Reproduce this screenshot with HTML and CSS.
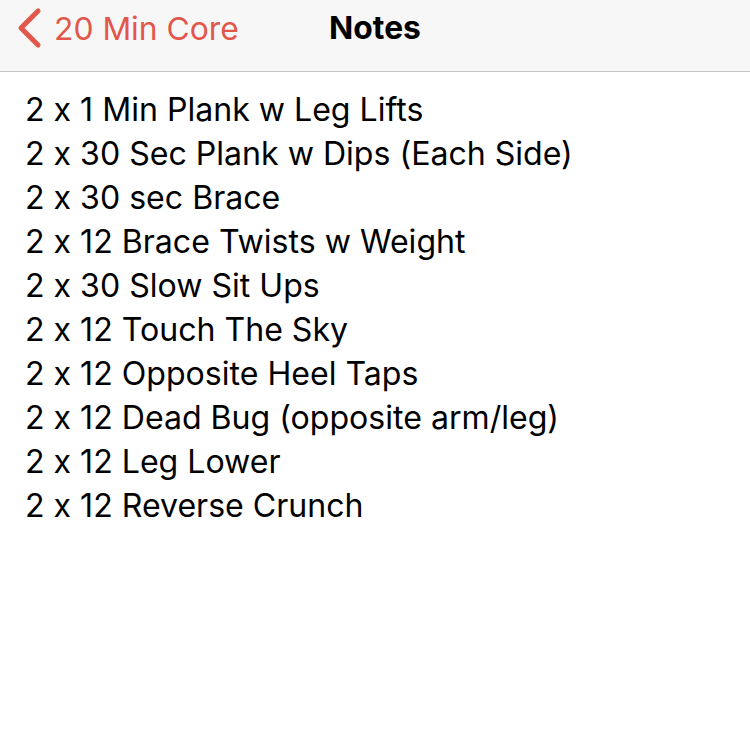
FILE: index.html
```html
<!DOCTYPE html>
<html>
<head>
<meta charset="utf-8">
<link rel="stylesheet" href="styles.css">
</head>
<body>
<header class="nav">
  <div class="back">
    <svg class="chev" width="26" height="42" viewBox="0 0 26 42"><path d="M22 4 L5 21 L22 38" fill="none" stroke="#e2574b" stroke-width="5" stroke-linecap="round" stroke-linejoin="round"/></svg>
    <span class="back-label">20 Min Core</span>
  </div>
  <div class="title">Notes</div>
</header>
<main class="notes">
  <div class="line">2 x 1 Min Plank w Leg Lifts</div>
  <div class="line">2 x 30 Sec Plank w Dips (Each Side)</div>
  <div class="line">2 x 30 sec Brace</div>
  <div class="line">2 x 12 Brace Twists w Weight</div>
  <div class="line">2 x 30 Slow Sit Ups</div>
  <div class="line">2 x 12 Touch The Sky</div>
  <div class="line">2 x 12 Opposite Heel Taps</div>
  <div class="line">2 x 12 Dead Bug (opposite arm/leg)</div>
  <div class="line">2 x 12 Leg Lower</div>
  <div class="line">2 x 12 Reverse Crunch</div>
</main>
</body>
</html>
```
FILE: styles.css
```css
html, body {
  margin: 0;
  padding: 0;
  background: #ffffff;
  font-family: Inter, "Liberation Sans", Arial, sans-serif;
  font-feature-settings: "calt" 0;
}
.nav {
  position: relative;
  height: 72px;
  box-sizing: border-box;
  background: #f7f7f7;
  border-bottom: 1.5px solid #c4c4c4;
  display: flex;
  align-items: center;
  justify-content: center;
}
.back {
  position: absolute;
  left: 16px;
  top: 0;
  height: 56px;
  display: flex;
  align-items: center;
  gap: 12px;
}
.chev {
  display: block;
}
.back-label {
  color: #e2574b;
  font-size: 31.8px;
  font-weight: 400;
}
.title {
  margin-top: -16px;
  font-size: 31.8px;
  font-weight: 700;
  color: #000;
}
.notes {
  padding: 16px 0 0 25px;
  display: flex;
  flex-direction: column;
}
.line {
  font-size: 32.1px;
  line-height: 44px;
  color: #000;
}
```
